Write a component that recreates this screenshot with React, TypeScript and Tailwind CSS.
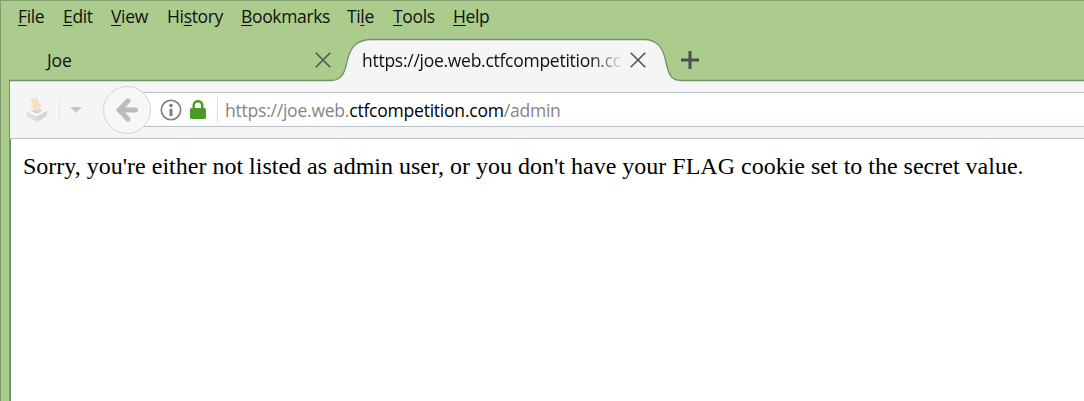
import React from "react";

const menu = [
  { before: "", key: "F", after: "ile", box: "w-[45px]" },
  { before: "", key: "E", after: "dit", box: "w-[48px]" },
  { before: "", key: "V", after: "iew", box: "w-[56px]" },
  { before: "Hi", key: "s", after: "tory", box: "w-[74px]" },
  { before: "", key: "B", after: "ookmarks", box: "w-[106px]" },
  { before: "Ti", key: "l", after: "e", box: "w-[46px]" },
  { before: "", key: "T", after: "ools", box: "w-[60px]" },
  { before: "", key: "H", after: "elp", box: "w-[60px]" },
];

function MenuBar() {
  return (
    <nav className="flex h-[33px] pl-[17px] text-[17.5px] leading-[31px] tracking-[-0.35px]">
      {menu.map((m) => (
        <span key={m.key + m.after} className={`${m.box} shrink-0 whitespace-nowrap`}>
          {m.before}
          <span className="underline decoration-1 underline-offset-[2px]">{m.key}</span>
          {m.after}
        </span>
      ))}
    </nav>
  );
}

function Cross() {
  return (
    <svg className="block h-4 w-4 shrink-0" viewBox="0 0 16 16" fill="none" stroke="#555752" strokeWidth="1.6">
      <path d="M.7.7 15.3 15.3M15.3.7.7 15.3" />
    </svg>
  );
}

function TabStrip() {
  return (
    <div className="relative h-[47px] w-full">
      <svg className="absolute left-0 top-0 h-[48px] w-[1083px]" viewBox="1 34 1083 48" fill="none">
        <path
          d="M9.5 82V80.5H331C340 80.5 344 75 346.500 64C350 47 356 39.5 372 39.5H644C658 39.5 663 49 665.500 60C668.500 75 671 80.5 681 80.5H1085V82Z"
          fill="#f5f5f5"
        />
        <path
          d="M9.5 82V80.5H331C340 80.5 344 75 346.500 64C350 47 356 39.5 372 39.5H644C658 39.5 663 49 665.500 60C668.500 75 671 80.5 681 80.5H1085"
          stroke="#71936a"
          strokeWidth="1.3"
        />
      </svg>
      <div className="relative flex h-[47px] items-center pt-[5px] text-[17.5px] leading-6">
        <span className="ml-[46px] w-[268px] tracking-[-0.15px]">Joe</span>
        <Cross />
        <span className="ml-[31px] w-[258px] overflow-hidden whitespace-nowrap tracking-[-0.27px] [mask-image:linear-gradient(to_right,black_228px,transparent_262px)]">
          https://joe.web.ctfcompetition.com/admin
        </span>
        <span className="ml-[10px]">
          <Cross />
        </span>
        <svg className="ml-[35px] h-[18px] w-[18px]" viewBox="0 0 18 18" stroke="#4c4e4c" strokeWidth="3">
          <path d="M9 0V18M0 9H18" />
        </svg>
      </div>
    </div>
  );
}

function DownloadIcon() {
  return (
    <svg className="h-6 w-6 shrink-0" viewBox="0 0 24 24">
      <path d="m1 14 10-6 10 4.500V18l-10 6L1 18.500Z" fill="#e0e0e0" />
      <path d="m1.500 13.500 10-5.500 9.500 4.500-10 6Z" fill="#fbfbfb" />
      <path d="m5 13.300 6.500-3.500 5.500 2.700-6 3.500Z" fill="#d6d6d6" />
      <path d="M11 18.500V24l10-6v-5.500Z" fill="#d6d6d6" />
      <path d="m4.500 0 7.500.500L13 6l3 .500-3.500 6.500L3.500 8.500 6.500 7Z" fill="#f8dfc6" />
    </svg>
  );
}

function Toolbar() {
  return (
    <div className="flex h-[58px] items-center border-b border-l border-b-[#bdbfc1] border-l-[#71936a] bg-[#f5f5f5]">
      <div className="ml-[16px] flex w-[77px] items-center">
        <DownloadIcon />
        <span className="ml-[9px] h-6 w-px bg-[#e6e6e6]" />
        <svg className="ml-[10px] h-[6px] w-[12px]" viewBox="0 0 12 6">
          <path d="M0 0h12L6 6Z" fill="#c6c6c6" />
        </svg>
      </div>
      <div className="z-10 flex h-12 w-12 shrink-0 items-center justify-center rounded-full border border-[#d3d5d7] bg-[#f7f7f7]">
        <svg className="h-6 w-6" viewBox="0 0 24 24" fill="none" stroke="#bbbcbe" strokeWidth="5">
          <path d="M5 12H20.500" strokeLinecap="round" />
          <path d="M13 2.800 4.300 12l8.700 9.200" strokeLinecap="round" />
        </svg>
      </div>
      <div className="-ml-[9px] flex h-[35px] grow items-center border-y border-[#b9c0cb] bg-white pl-[18px]">
        <svg className="h-[22px] w-[22px] shrink-0" viewBox="0 0 22 22" fill="none" stroke="#7d7d7d">
          <circle cx="11" cy="11" r="9.7" strokeWidth="1.6" />
          <circle cx="11" cy="6.6" r="1.8" fill="#7d7d7d" stroke="none" />
          <path d="M11 9.8V17" strokeWidth="3" />
        </svg>
        <svg className="ml-[8px] h-[19px] w-4 shrink-0" viewBox="0 0 16 19">
          <path d="M3.7 10V5.5a4.3 4.3 0 0 1 8.6 0V10" fill="none" stroke="#4c9a26" strokeWidth="2.5" />
          <rect y="8" width="16" height="11" rx="1.7" fill="#4c9a26" />
        </svg>
        <span className="ml-[11px] h-[25px] w-px bg-[#dcdcdc]" />
        <span className="ml-[7px] whitespace-nowrap text-[17.5px] leading-6 tracking-[-0.22px] text-[#858585]">
          https://joe.web.<span className="text-black">ctfcompetition.com</span>/admin
        </span>
      </div>
    </div>
  );
}

export default function App() {
  return (
    <div className="flex h-[401px] w-[1084px] flex-col overflow-hidden border-l border-t border-[#839f70] bg-[#abcc8d] font-['Open_Sans',sans-serif] text-[#111]">
      <MenuBar />
      <TabStrip />
      <div className="ml-[8px] flex grow flex-col">
        <Toolbar />
        <main className="grow border-l-2 border-[#71936a] bg-white pl-[12px] pt-[12px] font-['Liberation_Serif',serif] text-[24px] leading-[30px] text-black">
          <p className="whitespace-nowrap">
            Sorry, you're either not listed as admin user, or you don't have your FLAG cookie set to the secret value.
          </p>
        </main>
      </div>
    </div>
  );
}
